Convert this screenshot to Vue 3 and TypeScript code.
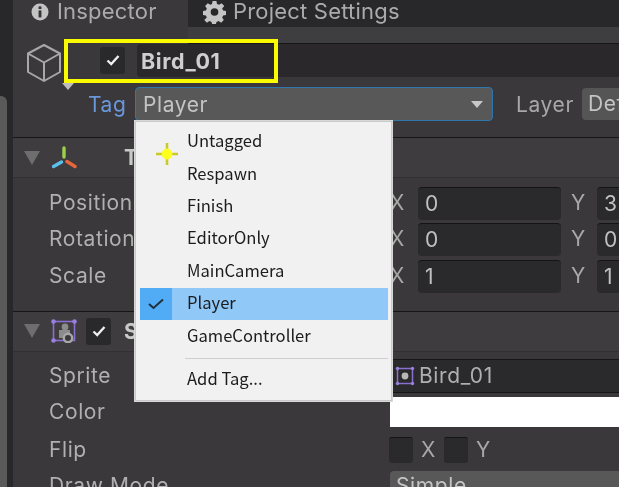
<script setup lang="ts">
interface TagItem {
  name: string
  selected?: boolean
}

const tags: TagItem[] = [
  { name: 'Untagged' },
  { name: 'Respawn' },
  { name: 'Finish' },
  { name: 'EditorOnly' },
  { name: 'MainCamera' },
  { name: 'Player', selected: true },
  { name: 'GameController' },
]

const transformRows = [
  { label: 'Position', x: '0', y: '3' },
  { label: 'Rotation', x: '0', y: '0' },
  { label: 'Scale', x: '1', y: '1' },
]
</script>

<template>
  <div class="screen">
    <div class="side-strip">
      <div class="side-block"></div>
    </div>

    <div class="panel">
      <div class="tabs">
        <div class="tab active">
          <svg class="tab-icon" viewBox="0 0 20 20" width="20" height="20">
            <circle cx="10" cy="10" r="8.5" fill="#c4c4c4" />
            <rect x="8.6" y="8.4" width="2.8" height="7" fill="#333" />
            <rect x="8.6" y="4.4" width="2.8" height="2.6" fill="#333" />
          </svg>
          <span>Inspector</span>
        </div>
        <div class="tab">
          <svg class="tab-icon" viewBox="0 0 24 24" width="23" height="23">
            <path
              fill="#c4c4c4"
              fill-rule="evenodd"
              d="M10 1h4l.6 3 2.2 1 2.6-1.7 2.8 2.8L20 8.7l1 2.3 3 .5v4l-3 .5-1 2.2 1.7 2.6-2.8 2.8-2.6-1.7-2.2.9-.6 2.2h-4l-.6-2.2-2.2-.9-2.6 1.7-2.8-2.8L4 18.2 3 16l-3-.5v-4l3-.5 1-2.3-1.8-2.6L5 3.3 7.6 5l1.8-1zM12 8.5a4 4 0 1 0 0 8 4 4 0 0 0 0-8z"
              transform="translate(0 -1)"
            />
          </svg>
          <span>Project Settings</span>
        </div>
      </div>

      <div class="object-header">
        <div class="top-stripe"></div>
        <div class="name-row">
          <svg class="cube" viewBox="0 0 36 40" width="36" height="40">
            <path
              d="M18 2 34 10.5V29L18 38 2 29V10.5ZM2 10.5 18 19.5 34 10.5M18 19.5V38"
              fill="none"
              stroke="#a8a8a8"
              stroke-width="2"
              stroke-linejoin="round"
            />
          </svg>
          <span class="checkbox name-check">
            <svg viewBox="0 0 16 16" width="16" height="16">
              <path d="M2.5 8.5 6.2 12 13.5 4" fill="none" stroke="#eee" stroke-width="2.4" />
            </svg>
          </span>
          <div class="name-field">Bird_01</div>
        </div>
        <div class="tag-row">
          <span class="prefab-arrow"></span>
          <span class="tag-label">Tag</span>
          <div class="tag-select">
            <span>Player</span>
            <span class="select-arrow"></span>
          </div>
          <span class="layer-label">Layer</span>
          <div class="layer-select">Default</div>
        </div>
      </div>

      <section class="component transform">
        <div class="component-head">
          <span class="fold"></span>
          <svg class="comp-icon" viewBox="0 0 26 24" width="26" height="24">
            <path d="M13 2v9" stroke="#9ed04a" stroke-width="3.4" stroke-linecap="round" />
            <path d="M2.5 20.5 10.5 16" stroke="#5cc0ee" stroke-width="3.4" stroke-linecap="round" />
            <path d="M16 15.5 24 20.5" stroke="#e8663c" stroke-width="3.4" stroke-linecap="round" />
          </svg>
          <span class="comp-title transform-title">Transform</span>
        </div>
        <div class="vector-rows">
          <div v-for="row in transformRows" :key="row.label" class="vector-row">
            <span class="prop-label raised">{{ row.label }}</span>
            <span class="axis raised">X</span>
            <div class="num-field">{{ row.x }}</div>
            <span class="axis y-axis raised">Y</span>
            <div class="num-field">{{ row.y }}</div>
          </div>
        </div>
      </section>

      <section class="component">
        <div class="component-head">
          <span class="fold"></span>
          <svg class="comp-icon" viewBox="0 0 26 24" width="26" height="24">
            <rect x="2.5" y="2.5" width="21" height="19" fill="none" stroke="#8a6fd0" stroke-width="1.6" />
            <circle cx="14" cy="8" r="3.4" fill="#8c8c8c" />
            <rect x="8" y="11" width="11" height="8" fill="#8c8c8c" />
            <circle cx="17" cy="19" r="4.2" fill="#3a383a" stroke="#a8a8a8" stroke-width="2.4" />
            <g fill="#9a7fe0">
              <circle cx="2.5" cy="2.5" r="2.3" />
              <circle cx="23.5" cy="2.5" r="2.3" />
              <circle cx="2.5" cy="21.5" r="2.3" />
            </g>
          </svg>
          <span class="checkbox comp-check">
            <svg viewBox="0 0 16 16" width="16" height="16">
              <path d="M2.5 8.5 6.2 12 13.5 4" fill="none" stroke="#eee" stroke-width="2.4" />
            </svg>
          </span>
          <span class="comp-title">Sprite Renderer</span>
        </div>

        <div class="sprite-row sprite-first">
          <span class="prop-label">Sprite</span>
          <div class="sprite-field">
            <svg viewBox="0 0 20 20" width="20" height="20">
              <rect x="2.5" y="2.5" width="15" height="15" fill="none" stroke="#8a6fd0" stroke-width="1.5" />
              <circle cx="10" cy="10" r="3.4" fill="#b8b8b8" />
              <g fill="#9a7fe0">
                <circle cx="2.5" cy="2.5" r="1.7" />
                <circle cx="17.5" cy="2.5" r="1.7" />
                <circle cx="2.5" cy="17.5" r="1.7" />
                <circle cx="17.5" cy="17.5" r="1.7" />
              </g>
            </svg>
            <span>Bird_01</span>
          </div>
        </div>
        <div class="sprite-row color-row">
          <span class="prop-label">Color</span>
          <div class="color-field"></div>
        </div>
        <div class="sprite-row flip-row">
          <span class="prop-label">Flip</span>
          <span class="flip-box"></span>
          <span class="axis flip-axis">X</span>
          <span class="flip-box"></span>
          <span class="axis flip-axis">Y</span>
        </div>
        <div class="sprite-row mode-row">
          <span class="prop-label">Draw Mode</span>
          <div class="mode-select">Simple</div>
        </div>
      </section>
    </div>

    <div class="highlight"></div>

    <div class="tag-menu">
      <svg class="default-mark" viewBox="0 0 22 22" width="22" height="22">
        <path d="M11 0v22M0 11h22" stroke="#c9c92c" stroke-width="2.6" />
        <circle cx="11" cy="11" r="5.4" fill="#ffff1e" />
      </svg>
      <div v-for="tag in tags" :key="tag.name" class="menu-item" :class="{ selected: tag.selected }">
        <span class="menu-check">
          <svg v-if="tag.selected" viewBox="0 0 16 12" width="16" height="12">
            <path d="M1 6 5.5 10 15 1.5" fill="none" stroke="#20303c" stroke-width="2" />
          </svg>
        </span>
        <span class="menu-text">{{ tag.name }}</span>
      </div>
      <div class="menu-sep"></div>
      <div class="menu-item">
        <span class="menu-check"></span>
        <span class="menu-text">Add Tag...</span>
      </div>
    </div>
  </div>
</template>

<style>
html,
body {
  margin: 0;
  background: #3a383a;
}
</style>

<style scoped>
.screen {
  position: relative;
  display: flex;
  width: 619px;
  height: 487px;
  overflow: hidden;
  background: #3a383a;
  color: #b0b0b0;
  font-family: Inter, 'Noto Sans', sans-serif;
  font-size: 21px;
  letter-spacing: 0.6px;
  filter: blur(0.45px);
}

.side-strip {
  flex: 0 0 13px;
  box-sizing: border-box;
  padding-top: 96px;
  background: #282729;
}

.side-block {
  width: 7px;
  height: 100%;
  background: #5a5a5a;
  border-top-right-radius: 6px;
}

.panel {
  flex: 0 0 606px;
  width: 606px;
  min-width: 0;
}

.tabs {
  display: flex;
  height: 27px;
  background: #282729;
  font-size: 22px;
  line-height: 22px;
  letter-spacing: 0.2px;
  color: #ababab;
}

.tab {
  display: flex;
  align-items: center;
  gap: 7px;
  height: 27px;
  overflow: hidden;
}

.tab span {
  margin-top: -5px;
}

.tab-icon {
  margin-top: -3px;
}

.tab.active {
  box-sizing: border-box;
  width: 175px;
  padding-left: 17px;
  background: #3a383a;
}

.tab:not(.active) {
  padding-left: 15px;
}

.object-header {
  position: relative;
  height: 110px;
}

.top-stripe {
  position: absolute;
  top: 0;
  left: 175px;
  right: 0;
  height: 16px;
  background: #3e3d3f;
  border-bottom: 1px solid #161616;
}

.name-row {
  display: flex;
  align-items: center;
  height: 60px;
}

.cube {
  margin-left: 13px;
  margin-top: 12px;
}

.name-check {
  margin-left: 38px;
  margin-top: 6px;
}

.checkbox {
  display: inline-flex;
  flex: none;
  align-items: center;
  justify-content: center;
  box-sizing: border-box;
  width: 25px;
  height: 27px;
  border-radius: 3px;
  background: #29282a;
}

.name-field {
  flex: 1;
  align-self: flex-start;
  box-sizing: border-box;
  height: 33px;
  margin-top: 17px;
  margin-left: 12px;
  padding-left: 4px;
  background: #2a282a;
  border-radius: 4px 0 0 4px;
  color: #cfcfcf;
  font-weight: 700;
  font-size: 21.5px;
  line-height: 35px;
}

.tag-row {
  display: flex;
  align-items: center;
  height: 34px;
}

.prefab-arrow {
  flex: none;
  width: 0;
  height: 0;
  margin-left: 49px;
  margin-top: -36px;
  border-left: 6px solid transparent;
  border-right: 6px solid transparent;
  border-top: 7px solid #bdbdbd;
}

.tag-label {
  flex: none;
  width: 39px;
  margin-left: 14px;
  color: #6a97dc;
}

.tag-select {
  display: flex;
  flex: none;
  align-items: center;
  justify-content: space-between;
  box-sizing: border-box;
  width: 358px;
  height: 34px;
  margin-left: 8px;
  padding: 0 9px 0 7px;
  background: #585858;
  border: 1px solid #2f76ad;
  border-radius: 4px;
  color: #c4c4c4;
}

.select-arrow {
  width: 0;
  height: 0;
  border-left: 6px solid transparent;
  border-right: 6px solid transparent;
  border-top: 7px solid #c8c8c8;
}

.layer-label {
  flex: none;
  margin-left: 23px;
  color: #a8a8a8;
}

.layer-select {
  flex: none;
  box-sizing: border-box;
  width: 120px;
  height: 32px;
  margin-left: 8px;
  padding-left: 6px;
  background: #555;
  border-radius: 4px;
  color: #c4c4c4;
  line-height: 32px;
}

.component {
  border-top: 1px solid #161616;
}

.component-head {
  display: flex;
  align-items: center;
  height: 39px;
  background: #3e3c3e;
  border-bottom: 1px solid #323032;
}

.fold {
  flex: none;
  width: 0;
  height: 0;
  margin-left: 11px;
  border-left: 8px solid transparent;
  border-right: 8px solid transparent;
  border-top: 14px solid #6e6e6e;
}

.comp-icon {
  flex: none;
  margin-left: 11px;
}

.comp-check {
  margin-left: 9px;
}

.comp-title {
  margin-left: 13px;
  color: #c8c8c8;
  font-weight: 700;
}

.transform-title {
  margin-left: 47px;
}

.vector-rows {
  display: flex;
  flex-direction: column;
  gap: 2.5px;
  padding: 8px 0 17.5px;
}

.vector-row {
  display: flex;
  align-items: center;
  height: 34px;
}

.raised {
  padding-bottom: 2px;
}

.prop-label {
  flex: none;
  width: 341px;
  padding-left: 36px;
  white-space: nowrap;
}

.axis {
  flex: none;
  width: 28px;
  color: #a8a8a8;
}

.y-axis {
  width: 26px;
  margin-left: 10px;
}

.num-field {
  flex: none;
  box-sizing: border-box;
  width: 143px;
  height: 33px;
  padding-left: 7px;
  background: #2a292b;
  border-top: 1px solid #141414;
  border-radius: 4px;
  color: #c0c0c0;
  line-height: 32px;
}

.sprite-row {
  display: flex;
  align-items: center;
}

.sprite-first {
  height: 32px;
  margin-top: 8px;
}

.sprite-field {
  display: flex;
  flex: 1;
  align-items: center;
  gap: 4px;
  height: 32px;
  padding-left: 5px;
  background: #2a292b;
  border-top: 1px solid #161616;
  border-bottom: 1px solid #161616;
}

.color-row {
  height: 30px;
  margin-top: 5px;
}

.color-field {
  flex: 1;
  height: 30px;
  background: #fff;
}

.flip-row {
  height: 26px;
  margin-top: 10px;
}

.flip-box {
  flex: none;
  box-sizing: border-box;
  width: 24px;
  height: 26px;
  margin-left: -1px;
  background: #2a292b;
  border-top: 1px solid #141414;
  border-radius: 3px;
}

.flip-axis {
  width: 24px;
  padding-left: 8px;
}

.mode-row {
  height: 30px;
  margin-top: 8px;
}

.mode-select {
  flex: 1;
  box-sizing: border-box;
  height: 30px;
  padding-left: 6px;
  background: #585858;
  border-radius: 4px 0 0 4px;
  color: #c4c4c4;
  line-height: 30px;
}

.highlight {
  position: absolute;
  left: 64px;
  top: 39px;
  box-sizing: border-box;
  width: 214px;
  height: 44px;
  border: 4px solid #fbfb00;
}

.tag-menu {
  position: absolute;
  left: 135px;
  top: 121px;
  box-sizing: border-box;
  width: 257px;
  height: 280px;
  padding: 4px 3px 0 4px;
  background: #f1f1f1;
  border: 1px solid #c9c9c9;
  box-shadow: 0 0 0 1px #d8d8d8;
  color: #1c1c1c;
  font-family: 'Noto Sans CJK KR', 'Noto Sans', sans-serif;
  font-size: 16.6px;
  letter-spacing: 0;
}

.default-mark {
  position: absolute;
  left: 20px;
  top: 21px;
}

.menu-item {
  display: flex;
  align-items: center;
  height: 32.4px;
}

.menu-check {
  display: flex;
  flex: none;
  align-items: center;
  justify-content: center;
  width: 32px;
  align-self: stretch;
}

.menu-text {
  margin-left: 15px;
  padding-bottom: 4px;
}

.menu-item.selected {
  background: #90c8f8;
}

.menu-item.selected .menu-check {
  background: #52abf5;
}

.menu-sep {
  height: 1px;
  margin: 5px 0 5px 45px;
  background: #cfcfcf;
}
</style>
